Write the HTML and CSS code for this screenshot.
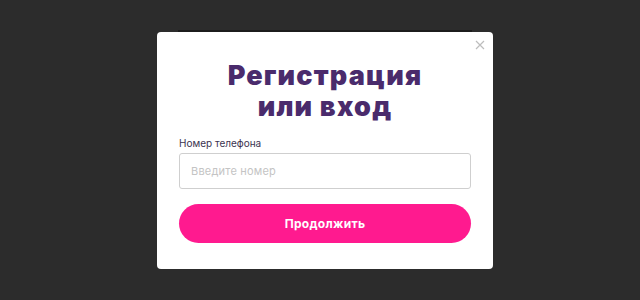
FILE: index.html
```html
<!DOCTYPE html>
<html lang="ru">
<head>
<meta charset="utf-8">
<link rel="stylesheet" href="styles.css">
</head>
<body>
<div class="stage">
  <div class="backstrip"></div>
  <div class="modal">
    <button class="close" aria-label="Закрыть">
      <svg width="10" height="10" viewBox="0 0 10 10"><path d="M1 1L9 9M9 1L1 9" stroke="#bdbdbd" stroke-width="1.2" fill="none"/></svg>
    </button>
    <h1 class="title">Регистрация<br>или вход</h1>
    <label class="label" for="phone">Номер телефона</label>
    <input class="input" id="phone" type="text" placeholder="Введите номер">
    <button class="submit">Продолжить</button>
  </div>
</div>
</body>
</html>
```
FILE: styles.css
```css
html, body {
  margin: 0;
  padding: 0;
  background: #2c2c2c;
  height: 300px;
  overflow: hidden;
}
.stage {
  padding: 30px 0 0 157px;
  font-family: "Inter", "Noto Sans", sans-serif;
}
.backstrip {
  width: 294px;
  height: 2px;
  margin-left: 21px;
  background: #1c1c1c;
}
.modal {
  position: relative;
  box-sizing: border-box;
  width: 336px;
  height: 237px;
  background: #ffffff;
  border-radius: 4px;
  padding: 28px 22px 0 22px;
  display: flex;
  flex-direction: column;
}
.close {
  position: absolute;
  top: 8px;
  right: 8px;
  width: 10px;
  height: 10px;
  padding: 0;
  border: 0;
  background: none;
  display: flex;
}
.title {
  margin: 0;
  text-align: center;
  font-family: "Inter", "Noto Sans", sans-serif;
  font-weight: 900;
  font-size: 27px;
  line-height: 31px;
  color: #4a2b6c;
  letter-spacing: 1.2px;
}
.label {
  margin-top: 14px;
  font-size: 10px;
  line-height: 14px;
  color: #3b3350;
}
.input {
  box-sizing: border-box;
  margin-top: 3px;
  width: 292px;
  height: 36px;
  border: 1px solid #cfcfcf;
  border-radius: 3px;
  padding: 0 11px;
  font-family: "Inter", "Noto Sans", sans-serif;
  font-size: 11px;
  letter-spacing: 0.2px;
  outline: none;
}
.input::placeholder {
  color: #c4c4c4;
}
.submit {
  margin-top: 15px;
  width: 292px;
  height: 39px;
  border: 0;
  border-radius: 20px;
  background: #ff1a8f;
  color: #ffffff;
  font-family: "Inter", "Noto Sans", sans-serif;
  font-weight: 700;
  font-size: 12px;
  letter-spacing: 0.3px;
}
```
